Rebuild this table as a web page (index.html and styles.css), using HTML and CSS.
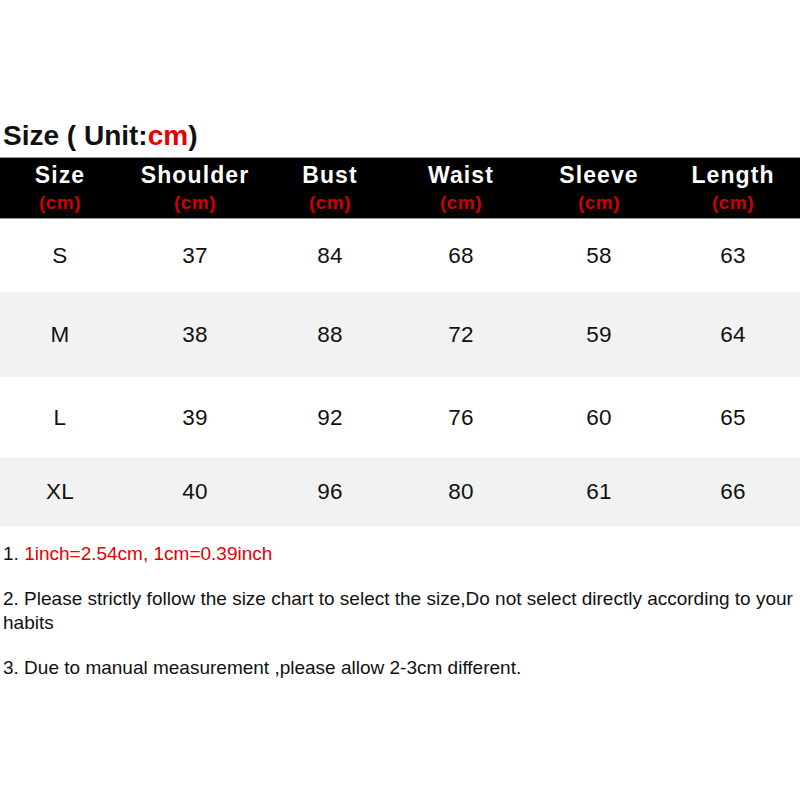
FILE: index.html
```html
<!DOCTYPE html>
<html>
<head>
<meta charset="utf-8">
<link rel="stylesheet" href="styles.css">
</head>
<body>
<div class="page">
  <h1 class="title">Size ( Unit:<span class="red">cm</span>)</h1>
  <div class="table">
    <div class="row head">
      <div class="cell"><span class="h">Size</span><span class="u">(cm)</span></div>
      <div class="cell"><span class="h">Shoulder</span><span class="u">(cm)</span></div>
      <div class="cell"><span class="h">Bust</span><span class="u">(cm)</span></div>
      <div class="cell"><span class="h">Waist</span><span class="u">(cm)</span></div>
      <div class="cell"><span class="h">Sleeve</span><span class="u">(cm)</span></div>
      <div class="cell"><span class="h">Length</span><span class="u">(cm)</span></div>
    </div>
    <div class="row r1">
      <div class="cell">S</div><div class="cell">37</div><div class="cell">84</div><div class="cell">68</div><div class="cell">58</div><div class="cell">63</div>
    </div>
    <div class="row r2 gray">
      <div class="cell">M</div><div class="cell">38</div><div class="cell">88</div><div class="cell">72</div><div class="cell">59</div><div class="cell">64</div>
    </div>
    <div class="row r3">
      <div class="cell">L</div><div class="cell">39</div><div class="cell">92</div><div class="cell">76</div><div class="cell">60</div><div class="cell">65</div>
    </div>
    <div class="row r4 gray">
      <div class="cell">XL</div><div class="cell">40</div><div class="cell">96</div><div class="cell">80</div><div class="cell">61</div><div class="cell">66</div>
    </div>
  </div>
  <div class="notes">
    <p>1. <span class="red">1inch=2.54cm, 1cm=0.39inch</span></p>
    <p>2. Please strictly follow the size chart to select the size,Do not select directly according to your habits</p>
    <p>3. Due to manual measurement ,please allow 2-3cm different.</p>
  </div>
</div>
</body>
</html>
```

FILE: styles.css
```css
* { box-sizing: border-box; }
html, body { margin: 0; padding: 0; background: #fff; }
body { font-family: "Liberation Sans", Arial, sans-serif; color: #111; width: 800px; height: 800px; overflow: hidden; }
.page { padding-top: 117px; }
.title { margin: 0; padding-left: 3px; font-size: 28px; font-weight: bold; line-height: 38px; height: 40px; color: #111; white-space: nowrap; }
.red { color: #e60000; }
.table { width: 800px; }
.row { display: grid; grid-template-columns: 120px 150px 120px 142px 134px 134px; align-items: center; }
.cell { text-align: center; font-size: 22.5px; letter-spacing: 0.3px; }
.head { background: #000; height: 62px; border-top: 1px solid #999; border-bottom: 1px solid #999; }
.head .cell { display: flex; flex-direction: column; align-items: center; }
.head .h { color: #fff; font-weight: bold; font-size: 23px; letter-spacing: 1.1px; line-height: 27px; padding-top: 1px; }
.head .u { color: #d00000; font-weight: bold; font-size: 19px; letter-spacing: 0.5px; line-height: 24px; padding-top: 2px; }
.r1 { height: 73px; }
.r2 { height: 85px; }
.r3 { height: 81px; }
.r4 { height: 68px; }
.gray { background: #f2f2f2; }
.notes { padding-left: 3px; padding-top: 16px; font-size: 19px; letter-spacing: 0; line-height: 24px; color: #111; }
.notes p { margin: 0 0 21px 0; }
```
